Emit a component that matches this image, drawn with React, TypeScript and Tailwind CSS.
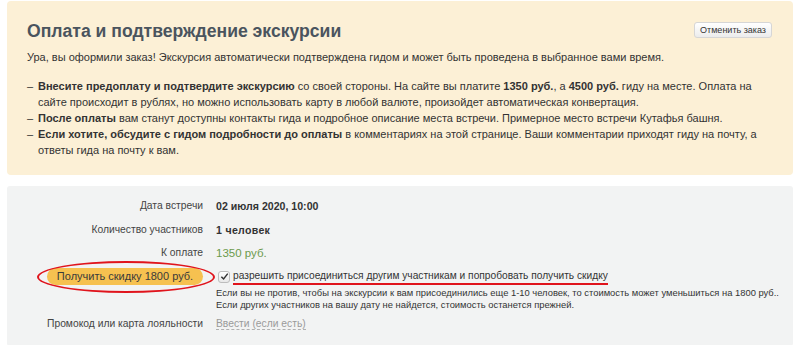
import React from 'react';

const font = { fontFamily: '"Liberation Sans", Arial, sans-serif' };

export default function App() {
    return (
        <div className="w-[800px] h-[345px] bg-white overflow-hidden text-[#333]" style={font}>
            {/* Order confirmation notice */}
            <div className="mx-[7px] mt-[1px] h-[174px] rounded-[4px] bg-[#fcf0d6] pl-[20px] pr-[21px] pt-[18px]">
                <div className="flex items-start justify-between">
                    <h1 className="text-[17.6px] leading-[24px] font-bold text-[#4a545e]">Оплата и подтверждение экскурсии</h1>
                    <button className="mt-[3px] h-[16px] px-[5px] rounded-[3px] border border-[#d6d6d6] bg-gradient-to-b from-white to-[#ececec] text-[9px] leading-[14px] text-[#333]">
                        Отменить заказ
                    </button>
                </div>
                <p className="mt-[6px] text-[11px] leading-[16px]">
                    Ура, вы оформили заказ! Экскурсия автоматически подтверждена гидом и может быть проведена в выбранное вами время.
                </p>
                <ul className="mt-[13px] w-[741px] text-[11px] leading-[16px]">
                    <li className="flex">
                        <span className="w-[11px] shrink-0">–</span>
                        <span><b>Внесите предоплату и подтвердите экскурсию</b> со своей стороны. На сайте вы платите <b>1350 руб.</b>, а <b>4500 руб.</b> гиду на месте. Оплата на сайте происходит в рублях, но можно использовать карту в любой валюте, произойдет автоматическая конвертация.</span>
                    </li>
                    <li className="flex">
                        <span className="w-[11px] shrink-0">–</span>
                        <span><b>После оплаты</b> вам станут доступны контакты гида и подробное описание места встречи. Примерное место встречи Кутафья башня.</span>
                    </li>
                    <li className="flex">
                        <span className="w-[11px] shrink-0">–</span>
                        <span><b>Если хотите, обсудите с гидом подробности до оплаты</b> в комментариях на этой странице. Ваши комментарии приходят гиду на почту, а ответы гида на почту к вам.</span>
                    </li>
                </ul>
            </div>

            {/* Order details */}
            <div className="mx-[7px] mt-[11px] h-[160px] rounded-[3px] bg-[#f2f3f3] pt-[12px] text-[10.3px]">
                <div className="grid grid-cols-[196px_1fr] gap-x-[13px] items-center">
                    <div className="text-right text-[#444] leading-[16px]">Дата встречи</div>
                    <div className="font-bold text-[10.6px] leading-[16px]">02 июля 2020, 10:00</div>

                    <div className="mt-[8px] text-right text-[#444] leading-[16px]">Количество участников</div>
                    <div className="mt-[8px] font-bold text-[10.6px] leading-[16px] tracking-[0.3px]">1 человек</div>

                    <div className="mt-[7px] text-right text-[#444] leading-[16px]">К оплате</div>
                    <div className="mt-[7px] text-[11.5px] text-[#6c9a4c] leading-[16px]">1350 руб.</div>

                    <div className="mt-[7px] flex justify-end">
                        <div className="relative">
                            <span className="block w-[156px] h-[17px] rounded-full bg-[#f6c150] text-center text-[11px] leading-[17px] text-[#3a3a3a]">Получить скидку 1800 руб.</span>
                            <div className="absolute left-[-10px] right-[-12px] top-[-7px] bottom-[-8px] rounded-[50%] border-2 border-[#e0141c]"></div>
                        </div>
                    </div>
                    <div className="mt-[7px] flex items-center">
                        <span className="ml-[2px] w-[12px] h-[12px] rounded-[3px] border border-[#bdbdbd] bg-gradient-to-b from-white to-[#e8e8e8] flex items-center justify-center">
                            <svg width="9" height="9" viewBox="0 0 10 10">
                                <path d="M1.5 5.2 L4 7.8 L8.6 1.8" fill="none" stroke="#333" strokeWidth="1.6" />
                            </svg>
                        </span>
                        <span className="ml-[3px] text-[10.2px] leading-[15px] border-b-2 border-[#e0141c] text-[#333]">разрешить присоединиться другим участникам и попробовать получить скидку</span>
                    </div>

                    <div></div>
                    <div className="mt-[2px] whitespace-nowrap text-[9.4px] leading-[12px] text-[#333]">
                        Если вы не против, чтобы на экскурсии к вам присоединились еще 1-10 человек, то стоимость может уменьшиться на 1800 руб..<br />
                        Если других участников на вашу дату не найдется, стоимость останется прежней.
                    </div>

                    <div className="mt-[5px] text-right text-[#444] leading-[16px]">Промокод или карта лояльности</div>
                    <div className="mt-[5px] leading-[16px]">
                        <span className="text-[#9a9a9a] border-b border-dashed border-[#b0b0b0]">Ввести (если есть)</span>
                    </div>
                </div>
            </div>
        </div>
    );
}
